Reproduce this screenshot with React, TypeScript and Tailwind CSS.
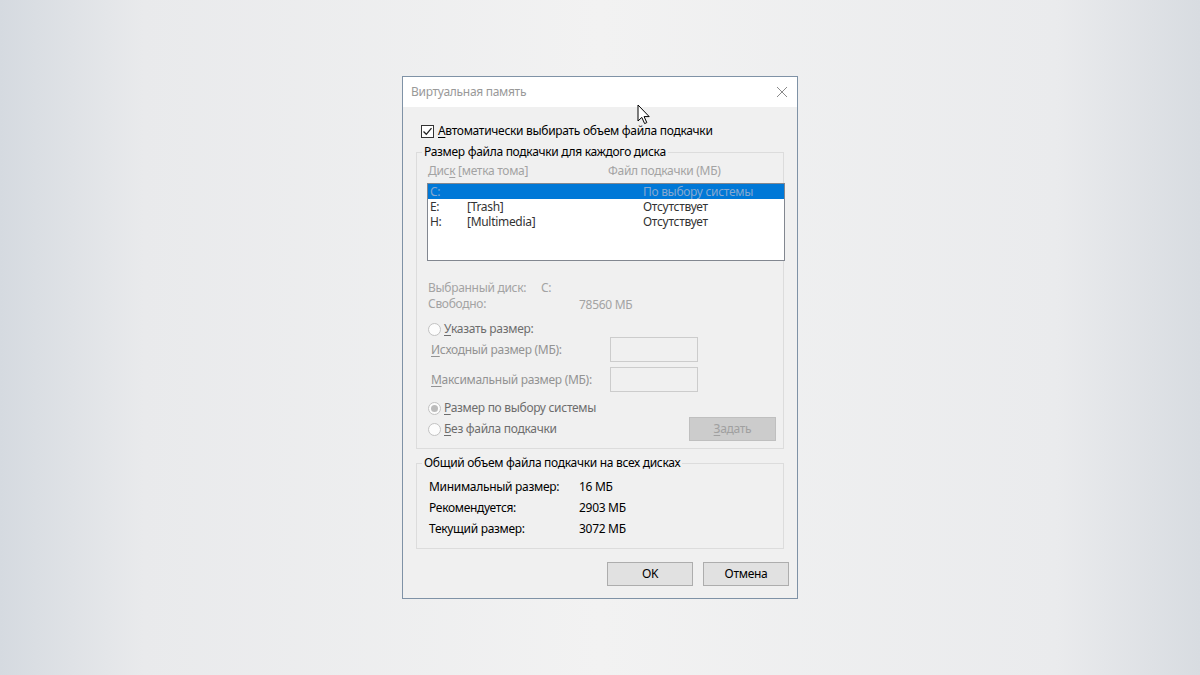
import React from 'react';

const font = 'font-["Noto_Sans","Liberation_Sans",sans-serif] text-[12px] leading-[16px] tracking-[-0.3px]';

function Radio({ checked = false }: { checked?: boolean }) {
  return (
    <span className="w-[13px] h-[13px] rounded-full border border-[#c2c2c2] bg-[#fcfcfc] flex items-center justify-center shrink-0">
      {checked && <span className="w-[7px] h-[7px] rounded-full bg-[#bcbcbc]" />}
    </span>
  );
}

function Acc({ children }: { children: React.ReactNode }) {
  return <span className="underline underline-offset-[2px] decoration-[1px]">{children}</span>;
}

const drives = [
  { letter: 'C:', label: '', size: 'По выбору системы', selected: true },
  { letter: 'E:', label: '[Trash]', size: 'Отсутствует', selected: false },
  { letter: 'H:', label: '[Multimedia]', size: 'Отсутствует', selected: false },
];

const totals = [
  { label: 'Минимальный размер:', value: '16 МБ' },
  { label: 'Рекомендуется:', value: '2903 МБ' },
  { label: 'Текущий размер:', value: '3072 МБ' },
];

export default function App() {
  return (
    <div
      className={`h-screen w-full flex items-center justify-center bg-[linear-gradient(to_right,#d5dae0_0%,#e9eaec_12%,#f2f2f2_50%,#eaebed_88%,#d8dce1_100%)] ${font}`}
    >
      <div className="relative w-[396px] h-[523px] border border-[#7f92a6] bg-[#f0f0f0] flex flex-col">
        {/* Title bar */}
        <div className="h-[30px] bg-white flex items-center justify-between pl-[8px] pr-[9px] shrink-0">
          <span className="text-[#999999]">Виртуальная память</span>
          <svg width="12" height="12" viewBox="0 0 12 12" className="text-[#8a8a8a]">
            <path d="M1 1 L11 11 M11 1 L1 11" stroke="currentColor" strokeWidth="1" />
          </svg>
        </div>

        {/* Auto checkbox */}
        <div className="mt-[16px] ml-[18px] h-[16px] flex items-center gap-[4px] text-black">
          <span className="w-[13px] h-[13px] border border-[#333333] bg-white flex items-center justify-center">
            <svg width="11" height="11" viewBox="0 0 11 11">
              <path d="M1.5 5.5 L4.3 8.3 L9.5 2.2" fill="none" stroke="#222" strokeWidth="1.3" />
            </svg>
          </span>
          <span>
            <Acc>А</Acc>втоматически выбирать объем файла подкачки
          </span>
        </div>

        {/* Per-drive group */}
        <fieldset className="mt-[5px] ml-[13px] mr-[13px] border border-[#dcdcdc] pb-[7px]">
          <legend className="ml-[5px] px-[2px] text-black">Размер файла подкачки для каждого диска</legend>

          <div className="mt-[3px] ml-[11px] h-[16px] flex text-[#a3a3a3]">
            <span className="w-[180px]">
              Дис<Acc>к</Acc> [метка тома]
            </span>
            <span>Файл подкачки (МБ)</span>
          </div>

          <div className="mt-[4px] ml-[10px] -mr-[2px] h-[78px] border border-[#828790] bg-white">
            {drives.map((d) => (
              <div
                key={d.letter}
                className={`h-[15px] leading-[15px] flex pl-[2px] ${
                  d.selected ? 'bg-[#0078d7] text-[#86a9d0]' : 'text-[#333333]'
                }`}
              >
                <span className="w-[37px]">{d.letter}</span>
                <span className="w-[176px]">{d.label}</span>
                <span>{d.size}</span>
              </div>
            ))}
          </div>

          <div className="mt-[19px] ml-[11px] text-[#a3a3a3]">
            <div className="h-[16px] flex">
              <span className="w-[113px]">Выбранный диск:</span>
              <span>C:</span>
            </div>
            <div className="h-[16px] flex">
              <span className="w-[151px]">Свободно:</span>
              <span className="mt-[1px]">78560 МБ</span>
            </div>
          </div>

          <div className="mt-[9px] ml-[11px] h-[16px] flex items-center gap-[3px] text-[#6d6d6d]">
            <Radio />
            <span>
              <Acc>У</Acc>казать размер:
            </span>
          </div>

          <div className="mt-[0px] ml-[14px] h-[25px] flex items-center text-[#939393]">
            <span className="w-[179px]">
              <Acc>И</Acc>сходный размер (МБ):
            </span>
            <span className="w-[88px] h-[25px] border border-[#cccccc] bg-[#f0f0f0]" />
          </div>
          <div className="mt-[5px] ml-[14px] h-[25px] flex items-center text-[#939393]">
            <span className="w-[179px]">
              <Acc>М</Acc>аксимальный размер (МБ):
            </span>
            <span className="w-[88px] h-[25px] border border-[#cccccc] bg-[#f0f0f0]" />
          </div>

          <div className="mt-[8px] ml-[11px] h-[16px] flex items-center gap-[3px] text-[#6d6d6d]">
            <Radio checked />
            <span>
              <Acc>Р</Acc>азмер по выбору системы
            </span>
          </div>
          <div className="mt-[1px] ml-[11px] mr-[7px] h-[24px] flex items-center justify-between text-[#6d6d6d]">
            <div className="flex items-center gap-[3px]">
              <Radio />
              <span>
                <Acc>Б</Acc>ез файла подкачки
              </span>
            </div>
            <div className="w-[87px] h-[24px] border border-[#bfbfbf] bg-[#cccccc] flex items-center justify-center text-[#a0a0a0]">
              <span>
                <Acc>З</Acc>адать
              </span>
            </div>
          </div>
        </fieldset>

        {/* Totals group */}
        <fieldset className="mt-[6px] ml-[13px] mr-[13px] border border-[#dcdcdc] pb-[9px]">
          <legend className="ml-[5px] px-[2px] text-black">Общий объем файла подкачки на всех дисках</legend>
          <div className="mt-[5px] ml-[12px] text-black">
            {totals.map((t) => (
              <div key={t.label} className="h-[21px] flex items-center">
                <span className="w-[150px]">{t.label}</span>
                <span>{t.value}</span>
              </div>
            ))}
          </div>
        </fieldset>

        {/* Buttons */}
        <div className="mt-[13px] mr-[8px] flex justify-end gap-[10px]">
          <button className="w-[86px] h-[24px] border border-[#adadad] bg-[#e1e1e1] text-black">OK</button>
          <button className="w-[86px] h-[24px] border border-[#adadad] bg-[#e1e1e1] text-black">Отмена</button>
        </div>

        {/* Mouse pointer */}
        <svg
          className="absolute left-[234px] top-[27px]"
          width="14"
          height="21"
          viewBox="0 0 14 21"
        >
          <path
            d="M1 1 L1 17 L4.8 13.4 L7.6 19.6 L9.8 18.6 L7.1 12.6 L12.2 12.6 Z"
            fill="#ffffff"
            stroke="#000000"
            strokeWidth="1"
            strokeLinejoin="round"
          />
        </svg>
      </div>
    </div>
  );
}
